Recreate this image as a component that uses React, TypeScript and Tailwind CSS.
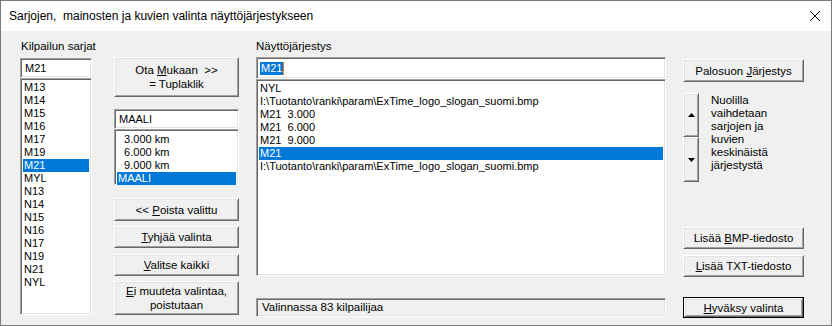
import { ReactNode } from 'react';

const bevelIn =
  'border border-t-[#a0a0a0] border-l-[#a0a0a0] border-b-white border-r-white shadow-[inset_1px_1px_0_#696969,inset_-1px_-1px_0_#e3e3e3]';
const sunken = `${bevelIn} bg-white`;
const raised =
  'border border-t-white border-l-white border-b-[#696969] border-r-[#696969] shadow-[inset_1px_1px_0_#e3e3e3,inset_-1px_-1px_0_#a0a0a0] bg-[#f0f0f0]';

const ui = "font-['Liberation_Sans',Arial,sans-serif] text-[11.5px]";
const listFont = "font-['Liberation_Sans',Arial,sans-serif] text-[11px] leading-[13px]";

function Btn({ children, className = '' }: { children: ReactNode; className?: string }) {
  return (
    <div className={`${raised} ${ui} flex items-center justify-center text-center leading-[14px] text-black ${className}`}>
      <div>{children}</div>
    </div>
  );
}

function Row({ text, selected }: { text: string; selected?: boolean }) {
  return (
    <div className={`h-[13px] pl-[1px] whitespace-pre ${selected ? 'bg-[#0078d7] text-white' : 'text-black'}`}>{text}</div>
  );
}

const sarjat = ['M13', 'M14', 'M15', 'M16', 'M17', 'M19', 'M21', 'MYL', 'N13', 'N14', 'N15', 'N16', 'N17', 'N19', 'N21', 'NYL'];
const rastit = ['  3.000 km', '  6.000 km', '  9.000 km', 'MAALI'];
const bmp = 'I:\\Tuotanto\\ranki\\param\\ExTime_logo_slogan_suomi.bmp';
const jarjestys = ['NYL', bmp, 'M21  3.000', 'M21  6.000', 'M21  9.000', 'M21', bmp];

export default function App() {
  return (
    <div className={`w-[832px] h-[326px] border border-[#7a7a7a] flex flex-col ${ui} text-black`}>
      {/* title bar */}
      <div className="h-[30px] bg-white flex items-center justify-between pl-[8px] pr-[9px]">
        <span className="text-[12px] whitespace-pre">Sarjojen,  mainosten ja kuvien valinta näyttöjärjestykseen</span>
        <svg width="12" height="12" viewBox="0 0 12 12" className="mr-[1px]">
          <path d="M1 1 L11 11 M11 1 L1 11" stroke="#000" strokeWidth="1" />
        </svg>
      </div>

      <div className="flex-1 bg-[#f0f0f0] flex pl-[19px]">
        {/* sarjat */}
        <div className="w-[72px] flex flex-col">
          <div className="mt-[7px] h-[16px] leading-[16px] pl-[1px] whitespace-nowrap">Kilpailun sarjat</div>
          <div className={`${sunken} mt-[4px] h-[20px] flex items-center pl-[4px] ${listFont}`}>M21</div>
          <div className={`${sunken} h-[237px] p-[2px] ${listFont}`}>
            {sarjat.map((s) => (
              <Row key={s} text={s} selected={s === 'M21'} />
            ))}
          </div>
        </div>

        {/* keskisarake */}
        <div className="w-[125px] ml-[22px] flex flex-col">
          <Btn className="mt-[26px] h-[40px]">
            Ota <u>M</u>ukaan&nbsp; &gt;&gt;
            <br />= Tuplaklik
          </Btn>
          <div className={`${sunken} mt-[12px] h-[20px] flex items-center pl-[4px] ${listFont}`}>MAALI</div>
          <div className={`${sunken} h-[56px] pt-[3px] px-[2px] ${listFont}`}>
            {rastit.map((r) => (
              <Row key={r} text={r} selected={r === 'MAALI'} />
            ))}
          </div>
          <Btn className="mt-[13px] h-[23px]">
            &lt;&lt; <u>P</u>oista valittu
          </Btn>
          <Btn className="mt-[5px] h-[22px]">
            <u>T</u>yhjää valinta
          </Btn>
          <Btn className="mt-[6px] h-[22px]">
            <u>V</u>alitse kaikki
          </Btn>
          <Btn className="mt-[5px] h-[34px]">
            <u>E</u>i muuteta valintaa,
            <br />
            poistutaan
          </Btn>
        </div>

        {/* näyttöjärjestys */}
        <div className="w-[410px] ml-[17px] flex flex-col">
          <div className="mt-[7px] h-[16px] leading-[16px]">Näyttöjärjestys</div>
          <div className={`${sunken} mt-[3px] h-[22px] flex items-center pl-[3px] ${listFont}`}>
            <span className="bg-[#0078d7] text-white px-[1px]">M21</span>
            <span className="w-[1px] h-[13px] bg-[#ff7a00]" />
          </div>
          <div className={`${sunken} h-[197px] p-[2px] ${listFont}`}>
            {jarjestys.map((r, i) => (
              <Row key={i} text={r} selected={i === 5} />
            ))}
          </div>
          <div className={`${bevelIn} bg-[#f0f0f0] mt-[22px] h-[19px] flex items-center pl-[5px]`}>
            Valinnassa 83 kilpailijaa
          </div>
        </div>

        {/* oikea sarake */}
        <div className="w-[121px] ml-[17px] flex flex-col">
          <Btn className="mt-[28px] h-[23px]">
            Palosuon <u>J</u>ärjestys
          </Btn>
          <div className="mt-[11px] flex">
            <div className="w-[16px] flex flex-col">
              <Btn className="h-[44px]">
                <svg width="7" height="4" viewBox="0 0 7 4" className="block">
                  <path d="M0 4 L3.5 0 L7 4 Z" fill="#000" />
                </svg>
              </Btn>
              <Btn className="h-[45px]">
                <svg width="7" height="4" viewBox="0 0 7 4" className="block">
                  <path d="M0 0 L7 0 L3.5 4 Z" fill="#000" />
                </svg>
              </Btn>
            </div>
            <div className="ml-[12px] mt-[1px] leading-[13px]">
              Nuolilla
              <br />
              vaihdetaan
              <br />
              sarjojen ja
              <br />
              kuvien
              <br />
              keskinäistä
              <br />
              järjestystä
            </div>
          </div>
          <Btn className="mt-[45px] h-[22px]">
            Lisää <u>B</u>MP-tiedosto
          </Btn>
          <Btn className="mt-[6px] h-[22px]">
            <u>L</u>isää TXT-tiedosto
          </Btn>
          <div className="mt-[20px] h-[21px] border border-black">
            <Btn className="h-full">
              <u>H</u>yväksy valinta
            </Btn>
          </div>
        </div>
      </div>
    </div>
  );
}
